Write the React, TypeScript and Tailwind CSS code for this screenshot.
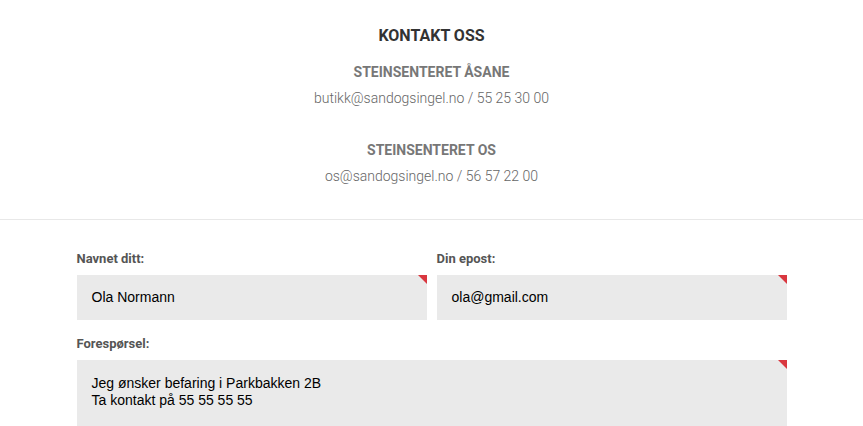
const roboto = { fontFamily: 'Roboto, "Liberation Sans", sans-serif' }

const stores = [
  { name: 'STEINSENTERET ÅSANE', contact: 'butikk@sandogsingel.no / 55 25 30 00' },
  { name: 'STEINSENTERET OS', contact: 'os@sandogsingel.no / 56 57 22 00' },
]

function Corner() {
  return (
    <span className="absolute right-0 top-0 h-0 w-0 border-l-[9px] border-t-[9px] border-l-transparent border-t-[#d9373f]" />
  )
}

function Field({ label, value }: { label: string; value: string }) {
  return (
    <div className="flex flex-col">
      <label className="mb-[9px] text-[13px] leading-[15px] font-bold text-[#555]">{label}</label>
      <div className="relative flex h-[45px] items-center bg-[#eaeaea] px-[15px] text-[14px] text-black font-['Liberation_Sans',Arial,sans-serif]">
        {value}
        <Corner />
      </div>
    </div>
  )
}

export default function App() {
  return (
    <div className="min-h-screen bg-white" style={roboto}>
      {/* Contact info */}
      <section className="flex flex-col items-center pt-[26px] pb-[34px] text-center">
        <h1 className="text-[16px] leading-[19px] font-bold text-[#333]">KONTAKT OSS</h1>
        {stores.map((s, i) => (
          <div key={s.name} className={i === 0 ? 'mt-[19px]' : 'mt-[35px]'}>
            <h2 className="text-[14px] leading-[17px] font-bold text-[#777]">{s.name}</h2>
            <p className="mt-[9px] text-[14px] leading-[17px] font-light text-[#666]">{s.contact}</p>
          </div>
        ))}
      </section>

      <div className="h-px bg-[#e8e8e8]" />

      {/* Form */}
      <form className="mx-auto w-[710px] pt-[31px]">
        <div className="grid grid-cols-2 gap-[10px]">
          <Field label="Navnet ditt:" value="Ola Normann" />
          <Field label="Din epost:" value="ola@gmail.com" />
        </div>
        <div className="mt-[16px] flex flex-col">
          <label className="mb-[9px] text-[13px] leading-[15px] font-bold text-[#555]">Forespørsel:</label>
          <div className="relative h-[80px] bg-[#eaeaea] px-[15px] pt-[15px] text-[14px] leading-[17px] text-black font-['Liberation_Sans',Arial,sans-serif]">
            <p>Jeg ønsker befaring i Parkbakken 2B</p>
            <p>Ta kontakt på 55 55 55 55</p>
            <Corner />
          </div>
        </div>
      </form>
    </div>
  )
}
